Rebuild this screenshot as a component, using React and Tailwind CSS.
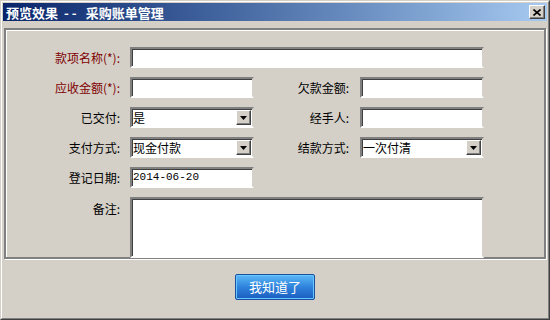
const font = { fontFamily: '"Noto Sans CJK SC", "Liberation Sans", sans-serif' };

const inset =
  "border-2 border-t-[#808080] border-l-[#808080] border-b-[#ffffff] border-r-[#d4d0c8] bg-white shadow-[inset_1px_1px_0_#404040]";

const Label = ({ children, red, w = "w-[115px]" }) => (
  <div
    className={`${w} shrink-0 text-right text-[12px] leading-[21px] pr-[1px] ${
      red ? "text-[#800000]" : "text-black"
    }`}
  >
    {children}
  </div>
);

const Input = ({ w, value = "", mono }) => (
  <div
    className={`${w} h-[21px] ${inset} flex items-center pl-[1px] text-[12px] text-black`}
    style={mono ? { fontFamily: '"Liberation Mono", monospace', fontSize: 11 } : undefined}
  >
    {value}
  </div>
);

const Select = ({ value }) => (
  <div className={`w-[124px] h-[21px] ${inset} flex items-center justify-between`}>
    <span className="pl-[1px] text-[12px] text-black leading-none">{value}</span>
    <div className="w-[15px] h-[15px] mr-[1px] bg-[#d4d0c8] border border-t-white border-l-white border-b-[#404040] border-r-[#404040] shadow-[inset_-1px_-1px_0_#808080] flex items-center justify-center">
      <svg width="7" height="4" viewBox="0 0 7 4">
        <path d="M0 0h7L3.5 4z" fill="#000" />
      </svg>
    </div>
  </div>
);

export default function App() {
  return (
    <div className="w-[550px] h-[320px] bg-[#d4d0c8] border border-t-[#d4d0c8] border-l-[#d4d0c8] border-b-[#404040] border-r-[#404040]" style={font}>
      <div className="h-full border border-t-white border-l-white border-b-[#808080] border-r-[#808080] p-[1px] flex flex-col">
        <div className="h-[18px] shrink-0 bg-gradient-to-r from-[#0a246a] to-[#a6caf0] flex items-center justify-between">
          <div className="pl-[3px] text-white font-bold text-[13px] leading-none flex items-center">
            <span>预览效果</span>
            <span className="ml-[6px] tracking-[3px]">--</span>
            <span className="ml-[6px]">采购账单管理</span>
          </div>
          <div className="w-[16px] h-[14px] mr-[2px] bg-[#d4d0c8] border border-t-white border-l-white border-b-[#404040] border-r-[#404040] shadow-[inset_-1px_-1px_0_#808080] flex items-center justify-center">
            <svg width="8" height="7" viewBox="0 0 8 7">
              <path d="M0.5 0.5l7 6M7.5 0.5l-7 6" stroke="#000" strokeWidth="1.6" />
            </svg>
          </div>
        </div>

        <div className="mt-[7px] ml-[1px] mr-[1px] h-[231px] shrink-0 border-2 border-[#808080] shadow-[inset_1px_1px_0_#ffffff,1px_1px_0_#ffffff]">
          <div className="pt-[17px] flex flex-col gap-[9px]">
            <div className="flex items-center gap-[9px]">
              <Label red>款项名称(*):</Label>
              <Input w="w-[354px]" />
            </div>
            <div className="flex items-center">
              <Label red>应收金额(*):</Label>
              <div className="ml-[9px]">
                <Input w="w-[124px]" />
              </div>
              <Label w="w-[96px]">欠款金额:</Label>
              <div className="ml-[10px]">
                <Input w="w-[124px]" />
              </div>
            </div>
            <div className="flex items-center">
              <Label>已交付:</Label>
              <div className="ml-[9px]">
                <Select value="是" />
              </div>
              <Label w="w-[96px]">经手人:</Label>
              <div className="ml-[10px]">
                <Input w="w-[124px]" />
              </div>
            </div>
            <div className="flex items-center">
              <Label>支付方式:</Label>
              <div className="ml-[9px]">
                <Select value="现金付款" />
              </div>
              <Label w="w-[96px]">结款方式:</Label>
              <div className="ml-[10px]">
                <Select value="一次付清" />
              </div>
            </div>
            <div className="flex items-center gap-[9px]">
              <Label>登记日期:</Label>
              <Input w="w-[124px]" value="2014-06-20" mono />
            </div>
            <div className="flex items-start gap-[9px]">
              <div className="pt-[1px]">
                <Label>备注:</Label>
              </div>
              <div className={`w-[354px] h-[61px] ${inset}`} />
            </div>
          </div>
        </div>

        <div className="flex-1 flex items-center justify-center pb-[3px]">
          <button className="w-[80px] h-[26px] rounded-[2px] border border-[#1b4fa0] bg-gradient-to-b from-[#5cb8f6] via-[#2f83dc] to-[#1c5cc0] shadow-[inset_0_0_0_1px_#66c8ff] text-white text-[13px] leading-none">
            我知道了
          </button>
        </div>
      </div>
    </div>
  );
}
